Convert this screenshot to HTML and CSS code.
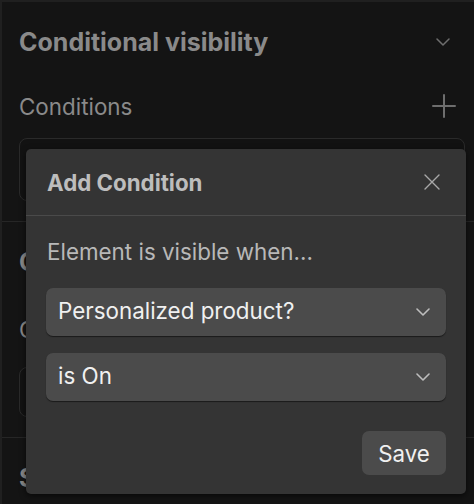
FILE: index.html
```html
<!DOCTYPE html>
<html lang="en">
<head>
    <meta charset="UTF-8">
    <title>Conditional visibility</title>
    <link rel="stylesheet" href="styles.css">
</head>
<body>
    <div class="panel">
        <div class="section">
            <div class="row heading-row">
                <h2 class="heading">Conditional visibility</h2>
                <svg class="icon chevron" width="14" height="8" viewBox="0 0 14 8"><path d="M1 1l6 6 6-6" /></svg>
            </div>
            <div class="row label-row">
                <span class="label">Conditions</span>
                <svg class="icon plus" width="24" height="24" viewBox="0 0 24 24"><path d="M12 1v22M1 12h22" /></svg>
            </div>
            <div class="box box-tall"></div>
        </div>
        <div class="section">
            <div class="row heading-row">
                <h2 class="heading">Content</h2>
            </div>
            <div class="row label-row second">
                <span class="label">Collection</span>
            </div>
            <div class="box box-short"></div>
        </div>
        <div class="section">
            <div class="row heading-row">
                <h2 class="heading">Settings</h2>
            </div>
        </div>
    </div>

    <div class="modal">
        <div class="modal-header">
            <span class="modal-title">Add Condition</span>
            <svg class="icon close" width="16" height="16" viewBox="0 0 16 16"><path d="M1 1l14 14M15 1L1 15" /></svg>
        </div>
        <div class="modal-body">
            <p class="hint">Element is visible when...</p>
            <div class="select">
                <span>Personalized product?</span>
                <svg class="icon chevron" width="14" height="8" viewBox="0 0 14 8"><path d="M1 1l6 6 6-6" /></svg>
            </div>
            <div class="select">
                <span>is On</span>
                <svg class="icon chevron" width="14" height="8" viewBox="0 0 14 8"><path d="M1 1l6 6 6-6" /></svg>
            </div>
            <div class="actions">
                <button class="save">Save</button>
            </div>
        </div>
    </div>
</body>
</html>
```

FILE: styles.css
```css
body {
    margin: 0;
    padding: 2px 0 0 2px;
    height: 504px;
    box-sizing: border-box;
    overflow: hidden;
    background-color: #202020;
    font-family: Inter, "Noto Sans", sans-serif;
    position: relative;
}

.panel {
    background-color: #141414;
    height: 100%;
}

.section {
    padding: 26px 9px 20px 17px;
    border-bottom: 1px solid #262626;
}

.row {
    display: flex;
    align-items: center;
    justify-content: space-between;
    height: 28px;
}

.heading {
    margin: 0;
    font-size: 25px;
    font-weight: 700;
    color: #8a8a8a;
}

.label {
    font-size: 22.4px;
    color: #8a8a8a;
}

.label-row {
    margin-top: 36px;
}

.label-row.second {
    margin-top: 39px;
}

.icon {
    fill: none;
    stroke-linecap: round;
    stroke-linejoin: round;
}

.heading-row .chevron {
    stroke: #6e6e6e;
    stroke-width: 1.5;
    margin-right: 15px;
}

.plus {
    stroke: #6e6e6e;
    stroke-width: 2;
    margin-right: 9px;
}

.box {
    border: 1px solid #2a2a2a;
    border-radius: 8px;
    background-color: #121212;
}

.box-tall {
    margin-top: 18px;
    height: 61px;
}

.box-short {
    margin-top: 24px;
    height: 48px;
}

.modal {
    position: absolute;
    left: 26px;
    top: 149px;
    width: 440px;
    height: 345px;
    background-color: #343434;
    border-radius: 5px;
    box-shadow: 0 2px 6px rgba(0, 0, 0, 0.6);
}

.modal-header {
    height: 66px;
    padding: 0 26px 0 21px;
    display: flex;
    align-items: center;
    justify-content: space-between;
    border-bottom: 1px solid #4a4a4a;
}

.modal-title {
    font-size: 22.3px;
    font-weight: 700;
    color: #bdbdbd;
}

.close {
    stroke: #a8a8a8;
    stroke-width: 1.4;
}

.modal-body {
    padding: 22px 20px 20px;
}

.hint {
    margin: 0 0 22px 1px;
    font-size: 22.4px;
    line-height: 28px;
    color: #b8b8b8;
}

.select {
    height: 48px;
    box-sizing: border-box;
    padding: 0 16px 0 12px;
    margin-bottom: 17px;
    display: flex;
    align-items: center;
    justify-content: space-between;
    background-color: #4b4b4b;
    border-radius: 7px;
    box-shadow: 0 1px 1px rgba(0, 0, 0, 0.5);
    font-size: 22.4px;
    line-height: 26px;
    color: #f0f0f0;
}

.select span {
    margin-top: -2px;
}

.select .chevron {
    stroke: #bdbdbd;
    stroke-width: 1.6;
}

.actions {
    display: flex;
    justify-content: flex-end;
    margin-top: 30px;
}

.save {
    width: 84px;
    height: 44px;
    border: none;
    border-radius: 7px;
    background-color: #4b4b4b;
    color: #f0f0f0;
    font-family: Inter, "Noto Sans", sans-serif;
    font-size: 22.3px;
}
```
